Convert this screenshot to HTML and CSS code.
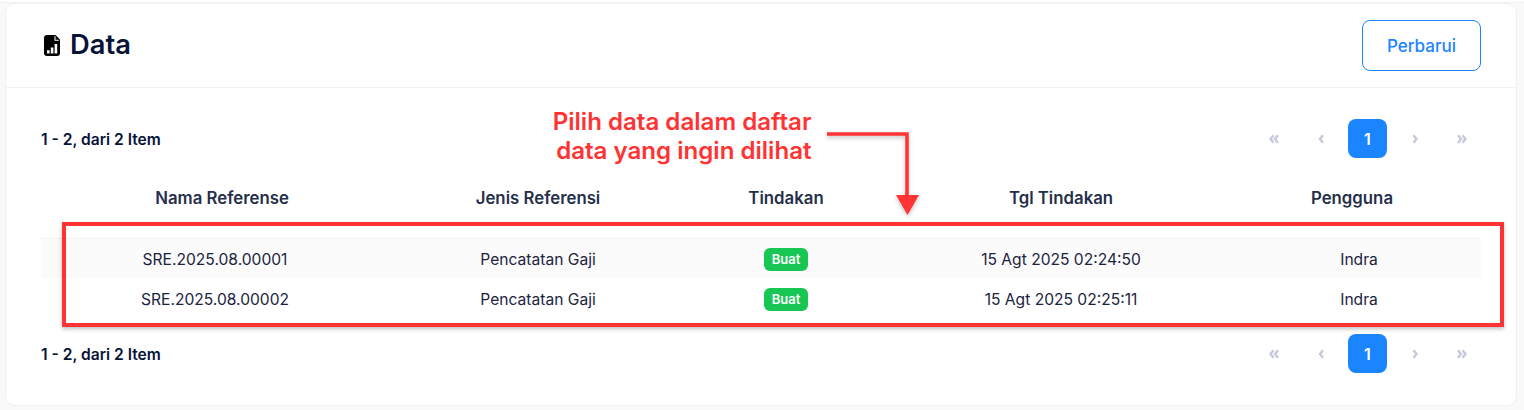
FILE: index.html
```html
<!doctype html>
<html lang="id">

<head>
    <meta charset="utf-8">
    <title>Data</title>
    <link rel="stylesheet" href="styles.css">
</head>

<body>
    <div class="top-strip"></div>
    <div class="card">
        <div class="card-header">
            <h1 class="card-title">
                <svg class="title-icon" viewBox="0 0 16 21" width="16" height="21">
                    <path fill="#000" d="M3 0h8.500l4.500 4.500V18a3 3 0 0 1-3 3H3a3 3 0 0 1-3-3V3a3 3 0 0 1 3-3z" />
                    <path fill="#fff" d="M10.500 1v4.700h4.700l-1-1H11.500V1.300z" />
                    <path fill="#fff" d="M3 15.200h2.600v3.300H3zM6.800 12.400h2.600v6.100H6.800zM10.600 9H13.200v9.500h-2.600z" />
                </svg>
                Data
            </h1>
            <button class="btn-outline">Perbarui</button>
        </div>
        <div class="card-body">
            <div class="pager-row">
                <span class="pager-info">1 - 2, dari 2 Item</span>
                <div class="pager">
                    <span class="pager-arrow"><svg class="chevron" viewBox="0 0 12 10" width="12" height="10"><path d="M5.500 1.300L2.500 5l3 3.700M10 1.300L7 5l3 3.700" /></svg></span>
                    <span class="pager-arrow"><svg class="chevron" viewBox="0 0 12 10" width="12" height="10"><path d="M8 1.300L5 5l3 3.700" /></svg></span>
                    <span class="pager-current">1</span>
                    <span class="pager-arrow"><svg class="chevron" viewBox="0 0 12 10" width="12" height="10"><path d="M4.500 1.300L7.500 5l-3 3.700" /></svg></span>
                    <span class="pager-arrow"><svg class="chevron" viewBox="0 0 12 10" width="12" height="10"><path d="M2 1.300L5 5 2 8.700M6.500 1.300L9.500 5l-3 3.700" /></svg></span>
                </div>
            </div>
            <table class="data-table">
                <thead>
                    <tr>
                        <th class="col-ref">Nama Referense</th>
                        <th class="col-type">Jenis Referensi</th>
                        <th class="col-action">Tindakan</th>
                        <th class="col-date">Tgl Tindakan</th>
                        <th class="col-user">Pengguna</th>
                    </tr>
                </thead>
                <tbody>
                    <tr class="row-odd">
                        <td>SRE.2025.08.00001</td>
                        <td>Pencatatan Gaji</td>
                        <td><span class="badge">Buat</span></td>
                        <td>15 Agt 2025 02:24:50</td>
                        <td>Indra</td>
                    </tr>
                    <tr>
                        <td>SRE.2025.08.00002</td>
                        <td>Pencatatan Gaji</td>
                        <td><span class="badge">Buat</span></td>
                        <td>15 Agt 2025 02:25:11</td>
                        <td>Indra</td>
                    </tr>
                </tbody>
            </table>
            <div class="pager-row">
                <span class="pager-info">1 - 2, dari 2 Item</span>
                <div class="pager">
                    <span class="pager-arrow"><svg class="chevron" viewBox="0 0 12 10" width="12" height="10"><path d="M5.500 1.300L2.500 5l3 3.700M10 1.300L7 5l3 3.700" /></svg></span>
                    <span class="pager-arrow"><svg class="chevron" viewBox="0 0 12 10" width="12" height="10"><path d="M8 1.300L5 5l3 3.700" /></svg></span>
                    <span class="pager-current">1</span>
                    <span class="pager-arrow"><svg class="chevron" viewBox="0 0 12 10" width="12" height="10"><path d="M4.500 1.300L7.500 5l-3 3.700" /></svg></span>
                    <span class="pager-arrow"><svg class="chevron" viewBox="0 0 12 10" width="12" height="10"><path d="M2 1.300L5 5 2 8.700M6.500 1.300L9.500 5l-3 3.700" /></svg></span>
                </div>
            </div>
        </div>
    </div>

    <!-- annotation drawn over the screenshot -->
    <div class="note-box"></div>
    <div class="note-text">Pilih data dalam daftar<br>data yang ingin dilihat</div>
    <svg class="note-arrow" viewBox="0 0 100 90" width="100" height="90">
        <path fill="none" stroke="#ff3333" stroke-width="3.500" d="M2 4H82V66" />
        <path fill="#ff3333" d="M71 65H94L82.500 85z" />
    </svg>
</body>

</html>
```

FILE: styles.css
```css
html,
body {
    margin: 0;
    padding: 0;
}

body {
    width: 1524px;
    height: 410px;
    overflow: hidden;
    position: relative;
    background: #f9f9fa;
    font-family: Inter, "Liberation Sans", sans-serif;
    color: #181c32;
}

.top-strip {
    height: 2px;
    background: #fefefe;
    border-bottom: 1px solid #f1f1f4;
}

.card {
    box-sizing: border-box;
    width: 1512px;
    height: 403px;
    margin: 0 0 0 5px;
    background: #fff;
    border: 1px solid #f1f1f4;
    border-radius: 10px;
}

.card-header {
    box-sizing: border-box;
    height: 84px;
    padding: 16px 35px 16px 36px;
    display: flex;
    align-items: center;
    justify-content: space-between;
    border-bottom: 1px solid #f1f1f4;
}

.card-title {
    margin: -2px 0 0;
    display: flex;
    align-items: center;
    gap: 10px;
    font-size: 27.300px;
    font-weight: 600;
    color: #071437;
}

.title-icon {
    margin-left: 2px;
    margin-top: 2px;
}

.btn-outline {
    box-sizing: border-box;
    width: 119px;
    height: 51px;
    background: #fff;
    border: 1px solid #1b84ff;
    border-radius: 8px;
    color: #1b84ff;
    font-family: inherit;
    font-size: 17px;
    font-weight: 500;
}

.card-body {
    padding: 31px 35px 0;
}

.pager-row {
    display: flex;
    align-items: center;
    justify-content: space-between;
    height: 39px;
}

.pager-info {
    font-size: 15.600px;
    font-weight: 600;
    color: #071437;
    padding-top: 1px;
}

.pager {
    display: flex;
    gap: 8px;
}

.pager-arrow,
.pager-current {
    width: 39px;
    height: 39px;
    display: flex;
    align-items: center;
    justify-content: center;
    border-radius: 8px;
}

.chevron {
    fill: none;
    stroke: #c4cada;
    stroke-width: 2.400;
}

.pager-current {
    background: #1b84ff;
    color: #fff;
    font-size: 16px;
    font-weight: 600;
}

.data-table {
    width: 1440px;
    margin-top: 20px;
    margin-bottom: 16px;
    border-collapse: collapse;
    table-layout: fixed;
    color: #252f4a;
}

.data-table th {
    height: 60px;
    padding: 0 0 20px;
    box-sizing: border-box;
    font-size: 16.800px;
    font-weight: 600;
    text-align: center;
    border-bottom: 1px solid #f1f1f4;
}

.data-table td {
    box-sizing: border-box;
    height: 40px;
    padding: 2px 0 0;
    text-align: center;
    font-size: 15.600px;
    color: #1b2440;
}

.data-table td:first-child {
    padding-right: 14px;
}

.data-table td:last-child {
    padding-left: 14px;
}

.col-ref {
    width: 362px;
}

.col-type {
    width: 270px;
}

.col-action {
    width: 226px;
}

.col-date {
    width: 324px;
}

.col-user {
    width: 258px;
}

.row-odd {
    background: #fbfbfb;
}

.data-table .badge {
    display: inline-block;
    width: 44px;
    height: 23px;
    line-height: 23px;
    border-radius: 6px;
    background: #17c653;
    color: #fff;
    font-size: 13px;
    font-weight: 600;
    vertical-align: middle;
}

.note-box {
    position: absolute;
    left: 62px;
    top: 222px;
    width: 1434px;
    height: 97px;
    border: 4px solid #ff3333;
    box-shadow: 0 2px 4px rgba(0, 0, 0, .25);
}

.note-text {
    position: absolute;
    right: 712.500px;
    top: 107px;
    text-align: right;
    font-size: 24.100px;
    line-height: 29px;
    font-weight: 600;
    color: #ff3333;
}

.note-arrow {
    position: absolute;
    left: 825px;
    top: 130px;
    filter: drop-shadow(0 2px 2px rgba(0, 0, 0, .25));
}
```
